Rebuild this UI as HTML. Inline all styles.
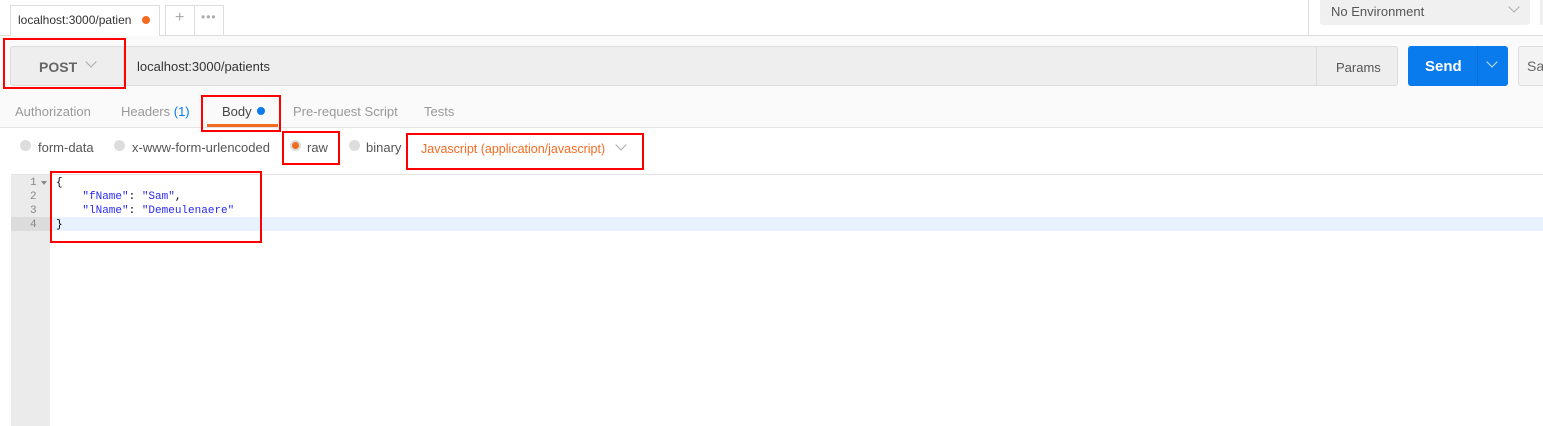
<!DOCTYPE html>
<html><head><meta charset="utf-8"><style>
*{margin:0;padding:0;box-sizing:border-box}
body{width:1543px;height:426px;overflow:hidden;background:#fff;font-family:"Liberation Sans",sans-serif;position:relative;color:#505050}
.a{position:absolute}
.t{font-size:13px;white-space:nowrap}
.red{position:absolute;border:2px solid #f00}
.chev{position:absolute;width:8px;height:8px;border-right:1.5px solid #aaa;border-bottom:1.5px solid #aaa;transform:rotate(45deg)}
.radio{position:absolute;width:11px;height:11px;border-radius:50%;background:#ddd}
.code{font-family:"Liberation Mono",monospace;font-size:11px;white-space:pre;line-height:14px}
</style></head><body>
<div class="a" style="left:0;top:35px;width:1543px;height:93px;background:#fafafa;border-top:1px solid #ddd;border-bottom:1px solid #e4e4e4"></div>
<div class="a" style="left:10px;top:5px;width:150px;height:31px;background:#fff;border:1px solid #ddd;border-bottom:none"></div>
<div class="a t" style="left:18px;top:13px;font-size:12px;color:#333">localhost:3000/patien</div>
<div class="a" style="left:142px;top:16px;width:8px;height:8px;border-radius:50%;background:#f26b21"></div>
<div class="a" style="left:165px;top:5px;width:59px;height:30px;background:#fff;border:1px solid #ddd;border-bottom:none"></div>
<div class="a" style="left:194px;top:5px;width:1px;height:30px;background:#ddd"></div>
<div class="a t" style="left:175px;top:9px;font-size:16px;color:#aaa">+</div>
<div class="a t" style="left:201px;top:10px;font-size:12px;color:#aaa;letter-spacing:1px">•••</div>
<div class="a" style="left:1308px;top:0;width:1px;height:35px;background:#ddd"></div>
<div class="a" style="left:1320px;top:0;width:210px;height:25px;background:#f0f0f0;border-radius:0 0 3px 3px"></div>
<div class="a t" style="left:1331px;top:4px;color:#555">No Environment</div>
<div class="chev" style="left:1510px;top:3px"></div>
<div class="a" style="left:1540px;top:0;width:3px;height:25px;background:#f0f0f0"></div>
<div class="a" style="left:10px;top:46px;width:1388px;height:40px;background:#eee;border:1px solid #ddd;border-radius:3px"></div>
<div class="a" style="left:123px;top:46px;width:1px;height:40px;background:#ddd"></div>
<div class="a t" style="left:39px;top:59px;font-size:14px;font-weight:bold;color:#666">POST</div>
<div class="chev" style="left:87px;top:58px"></div>
<div class="a t" style="left:137px;top:59px;color:#333">localhost:3000/patients</div>
<div class="a" style="left:1316px;top:46px;width:1px;height:40px;background:#ddd"></div>
<div class="a t" style="left:1336px;top:60px;color:#555">Params</div>
<div class="a" style="left:1408px;top:46px;width:100px;height:40px;background:#097bed;border-radius:3px"></div>
<div class="a" style="left:1477px;top:46px;width:1px;height:40px;background:#0a6fd4"></div>
<div class="a t" style="left:1425px;top:58px;font-size:15px;font-weight:bold;color:#fff">Send</div>
<div class="chev" style="left:1488px;top:58px;border-color:#cfe3fb"></div>
<div class="a" style="left:1518px;top:46px;width:30px;height:40px;background:#f3f3f3;border:1px solid #ddd;border-radius:3px"></div>
<div class="a t" style="left:1527px;top:58px;font-size:14px;color:#666">Sa</div>
<div class="red" style="left:3px;top:38px;width:123px;height:51px"></div>
<div class="a t" style="left:15px;top:104px;color:#999">Authorization</div>
<div class="a t" style="left:121px;top:104px;color:#999">Headers <span style="color:#097bed">(1)</span></div>
<div class="a t" style="left:222px;top:104px;color:#444">Body</div>
<div class="a" style="left:257px;top:107px;width:8px;height:8px;border-radius:50%;background:#097bed"></div>
<div class="a" style="left:207px;top:124px;width:71px;height:3px;background:#f26b21"></div>
<div class="a t" style="left:293px;top:104px;color:#999">Pre-request Script</div>
<div class="a t" style="left:424px;top:104px;color:#999">Tests</div>
<div class="red" style="left:201px;top:95px;width:80px;height:37px"></div>
<div class="radio" style="left:20px;top:140px"></div><div class="a t" style="left:38px;top:140px;color:#555">form-data</div>
<div class="radio" style="left:114px;top:140px"></div><div class="a t" style="left:132px;top:140px;color:#555">x-www-form-urlencoded</div>
<div class="radio" style="left:290px;top:140px;background:#ddd"></div><div class="a" style="left:292px;top:142px;width:7px;height:7px;border-radius:50%;background:#f26b21"></div>
<div class="a t" style="left:307px;top:140px;color:#555">raw</div>
<div class="radio" style="left:349px;top:140px"></div><div class="a t" style="left:366px;top:140px;color:#555">binary</div>
<div class="a t" style="left:421px;top:142px;font-size:12.5px;color:#f26b21">Javascript (application/javascript)</div>
<div class="chev" style="left:617px;top:141px"></div>
<div class="red" style="left:282px;top:131px;width:58px;height:34px"></div>
<div class="red" style="left:406px;top:133px;width:238px;height:37px"></div>
<div class="a" style="left:11px;top:174px;width:1532px;height:1px;background:#e4e4e4"></div>
<div class="a" style="left:11px;top:175px;width:39px;height:251px;background:#ebebeb"></div>
<div class="a" style="left:11px;top:217px;width:39px;height:14px;background:#dcdcdc"></div>
<div class="a" style="left:50px;top:217px;width:1493px;height:14px;background:#e8f2fe"></div>
<div class="a code" style="left:30px;top:176px;color:#888">1
2
3
4</div>
<div class="a" style="left:41px;top:181px;width:0;height:0;border-left:3px solid transparent;border-right:3px solid transparent;border-top:4px solid #888"></div>
<div class="a code" style="left:56px;top:176px;color:#000">{
    <span style="color:#2a2af0">"fName"</span>: <span style="color:#2a2af0">"Sam"</span>,
    <span style="color:#2a2af0">"lName"</span>: <span style="color:#2a2af0">"Demeulenaere"</span>
}</div>
<div class="red" style="left:50px;top:171px;width:212px;height:72px"></div>
</body></html>
